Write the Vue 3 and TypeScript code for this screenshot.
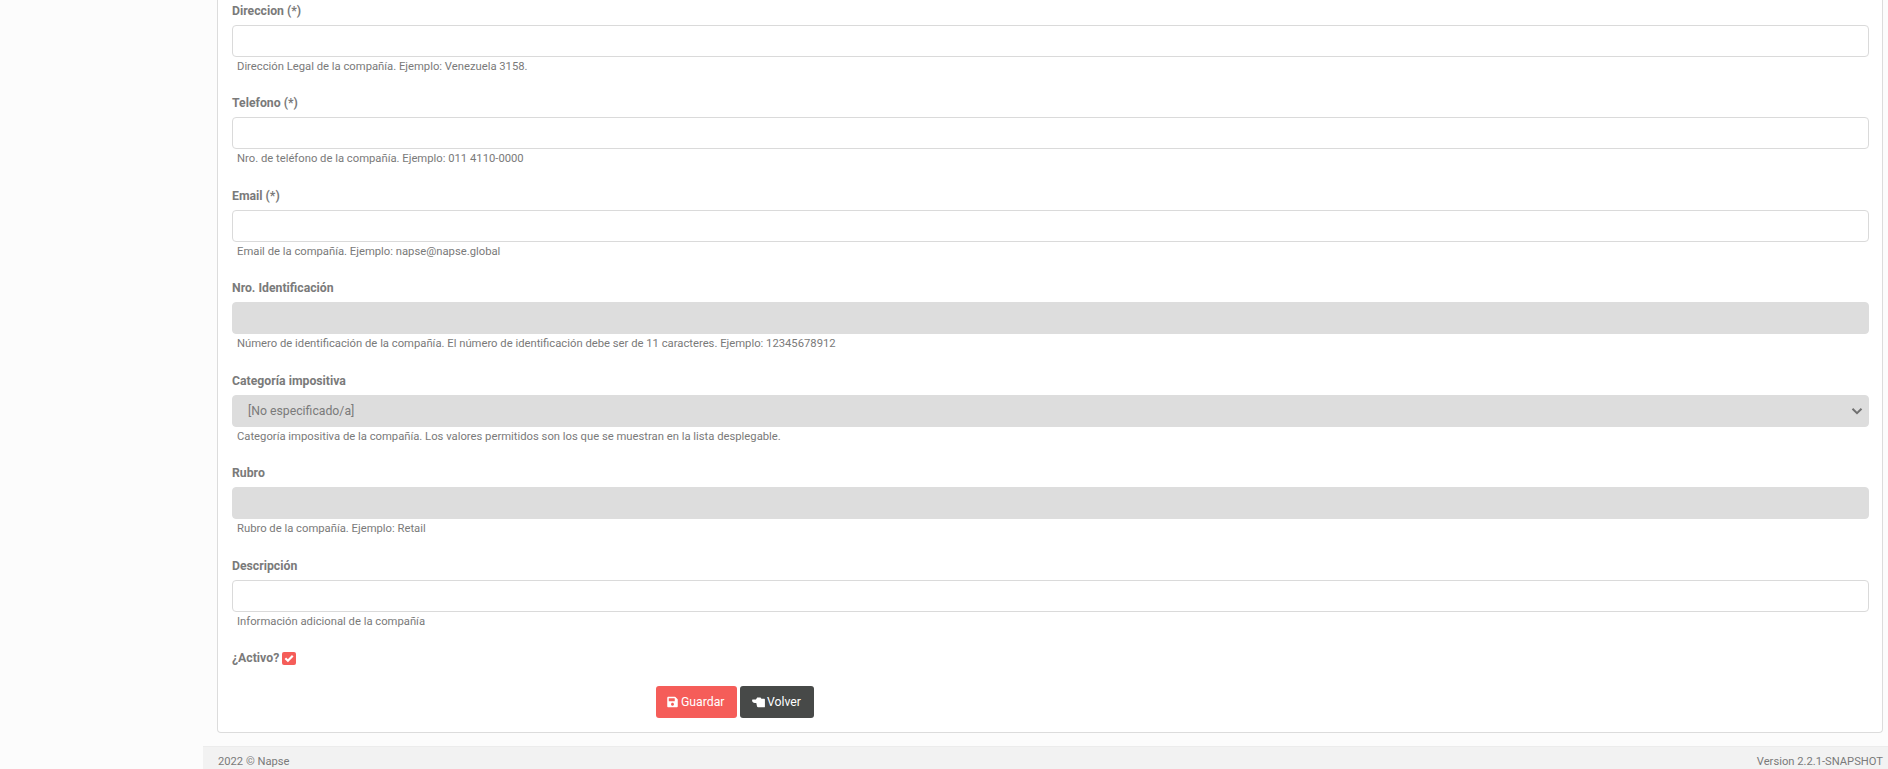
<script setup lang="ts">
interface Field {
  label: string;
  help: string;
  disabled?: boolean;
  select?: string;
}
const fields: Field[] = [
  { label: 'Direccion (*)', help: 'Dirección Legal de la compañía. Ejemplo: Venezuela 3158.' },
  { label: 'Telefono (*)', help: 'Nro. de teléfono de la compañía. Ejemplo: 011 4110-0000' },
  { label: 'Email (*)', help: 'Email de la compañía. Ejemplo: napse@napse.global' },
  { label: 'Nro. Identificación', help: 'Número de identificación de la compañía. El número de identificación debe ser de 11 caracteres. Ejemplo: 12345678912', disabled: true },
  { label: 'Categoría impositiva', help: 'Categoría impositiva de la compañía. Los valores permitidos son los que se muestran en la lista desplegable.', disabled: true, select: '[No especificado/a]' },
  { label: 'Rubro', help: 'Rubro de la compañía. Ejemplo: Retail', disabled: true },
  { label: 'Descripción', help: 'Información adicional de la compañía' },
];
</script>

<template>
  <div class="page">
    <aside class="sidebar"></aside>
    <div class="main">
      <div class="content">
        <section class="card">
          <div v-for="f in fields" :key="f.label" class="field">
            <div class="label">{{ f.label }}</div>
            <div class="control" :class="{ disabled: f.disabled }">
              <template v-if="f.select">
                <span class="select-value">{{ f.select }}</span>
                <svg class="chevron" viewBox="0 0 12 8" width="12" height="8" aria-hidden="true">
                  <path d="M1.5 1.8 6 6.2l4.5-4.4" fill="none" stroke="#707070" stroke-width="2" />
                </svg>
              </template>
            </div>
            <div class="help">{{ f.help }}</div>
          </div>
          <div class="active">
            <span class="label-inline">¿Activo?</span>
            <span class="check">
              <svg viewBox="0 0 12 12" width="10" height="10" aria-hidden="true">
                <path d="M1.6 6.2 4.7 9.2l5.8-6" fill="none" stroke="#fff" stroke-width="2.6" />
              </svg>
            </span>
          </div>
          <div class="actions">
            <button class="btn save" type="button">
              <svg viewBox="0 0 448 512" width="11" height="12" aria-hidden="true">
                <path fill="#fff" d="M433.9 129.9l-83.9-83.9A48 48 0 0 0 316.1 32H48C21.5 32 0 53.5 0 80v352c0 26.5 21.5 48 48 48h352c26.5 0 48-21.5 48-48V163.9a48 48 0 0 0-14.1-34zM224 416c-35.3 0-64-28.7-64-64s28.7-64 64-64 64 28.7 64 64-28.7 64-64 64zm96-304.5V212c0 6.6-5.4 12-12 12H76c-6.6 0-12-5.4-12-12V108c0-6.6 5.4-12 12-12h228.5c3.2 0 6.2 1.3 8.5 3.5l3.5 3.5c2.3 2.3 3.5 5.3 3.5 8.5z" />
              </svg>
              Guardar
            </button>
            <button class="btn back" type="button">
              <svg viewBox="0 0 14 12" width="13" height="11" aria-hidden="true">
                <path fill="#fff" d="M.8 2.6h3.4L5.6.6h3.6l1 1.4h3.1c.4 0 .7.3.7.7v7.8c0 .4-.3.7-.7.7H6.6c-.6 0-1-.4-1.2-.9L4.6 6.6H3C1.4 6.6 0 5.4 0 3.8c0-.6.3-1.2.8-1.2z" />
              </svg>
              Volver
            </button>
          </div>
        </section>
      </div>
      <footer class="footer">
        <span>2022 © Napse</span>
        <span>Version 2.2.1-SNAPSHOT</span>
      </footer>
    </div>
  </div>
</template>

<style>
html, body { margin: 0; height: 100%; overflow: hidden; background: #fcfcfc; }
</style>

<style scoped>
.page {
  display: flex;
  height: 769px;
  overflow: hidden;
  font-family: Roboto, "Liberation Sans", sans-serif;
  color: #7a7a7a;
  font-size: 12.25px;
}
.sidebar {
  width: 203px;
  flex: none;
  background: #fcfcfc;
}
.main {
  flex: 1;
  display: flex;
  flex-direction: column;
  background: #fcfcfc;
  min-width: 0;
}
.content {
  flex: 1;
  min-height: 0;
  padding: 0 5px 13px 14px;
  display: flex;
  flex-direction: column;
  justify-content: flex-end;
  overflow: hidden;
}
.card {
  background: #fff;
  border: 1px solid #dcdcdc;
  border-top: 0;
  border-radius: 0 0 4px 4px;
  padding: 2px 13px 14px 14px;
}
.field {
  height: 92.5px;
}
.label {
  font-weight: 700;
  line-height: 18px;
  color: #7a7a7a;
  margin-bottom: 5px;
}
.control {
  height: 32px;
  box-sizing: border-box;
  border: 1px solid #dadada;
  border-radius: 4px;
  background: #fff;
  display: flex;
  align-items: center;
  justify-content: space-between;
  padding: 0 5px 0 15px;
}
.control.disabled {
  background: #dddddd;
  border-color: #dddddd;
}
.select-value {
  color: #7a7a7a;
}
.help {
  font-size: 11.25px;
  line-height: 16px;
  padding-left: 5px;
  margin-top: 2px;
  color: #7a7a7a;
}
.active {
  display: flex;
  align-items: center;
  gap: 3px;
  height: 17px;
  font-weight: 700;
}
.check {
  width: 14px;
  height: 13px;
  border-radius: 2px;
  background: #f55d59;
  display: flex;
  align-items: center;
  justify-content: center;
  margin-top: 1px;
}
.actions {
  display: flex;
  gap: 3px;
  padding-left: 424px;
  margin-top: 20px;
}
.btn {
  height: 32px;
  border: 0;
  border-radius: 3px;
  color: #fff;
  font: 400 12.25px Roboto, "Liberation Sans", sans-serif;
  display: flex;
  align-items: center;
  gap: 3px;
  padding: 0 10px 0 11px;
}
.save { background: #f55d59; width: 81px; }
.back { background: #474948; width: 74px; padding-left: 12px; gap: 2px; }
.footer {
  height: 23px;
  flex: none;
  box-sizing: border-box;
  background: #f2f2f2;
  border-top: 1px solid #ececec;
  display: flex;
  align-items: center;
  justify-content: space-between;
  padding: 6px 5px 0 15px;
  font-size: 11.2px;
  color: #7a7a7a;
}
</style>
